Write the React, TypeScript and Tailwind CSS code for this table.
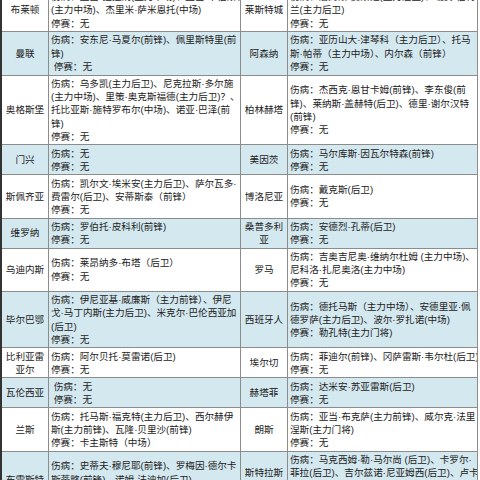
type Row = {
  l: string;
  lt: string[];
  r: string;
  rt: string[];
  blue?: boolean;
};

const rows: Row[] = [
  {
    l: '布莱顿',
    lt: ['伤病：亚当·拉拉纳(主力中场)、亚当·韦伯斯特', '(主力中场)、杰里米·萨米恩托(中场)', '停赛：无'],
    r: '莱斯特城',
    rt: ['伤病：詹姆斯·贾斯廷(主力后卫)、瑞安·伯特', '兰(主力后卫)', '停赛：无'],
  },
  {
    l: '曼联',
    lt: ['伤病：安东尼·马夏尔(前锋)、佩里斯特里(前', '锋)', ' 停赛：无'],
    r: '阿森纳',
    rt: ['伤病：亚历山大·津琴科（主力后卫）、托马', '斯·帕蒂（主力中场）、内尔森（前锋）', '停赛：无'],
    blue: true,
  },
  {
    l: '奥格斯堡',
    lt: [
      '伤病：乌多凯(主力后卫)、尼克拉斯·多尔施',
      '(主力中场)、里策·奥克斯福德(主力后卫)？、',
      '托比亚斯·施特罗布尔(中场)、诺亚·巴泽(前',
      '锋)',
      '停赛：无',
    ],
    r: '柏林赫塔',
    rt: ['伤病：杰西克·恩甘卡姆(前锋)、李东俊(前', '锋)、莱纳斯·盖赫特(后卫)、德里·谢尔汉特', '(前锋)', '停赛：无'],
  },
  {
    l: '门兴',
    lt: ['伤病：无', '停赛：无'],
    r: '美因茨',
    rt: ['伤病：马尔库斯·因瓦尔特森(前锋)', '停赛：无'],
    blue: true,
  },
  {
    l: '斯佩齐亚',
    lt: ['伤病：凯尔文·埃米安(主力后卫)、萨尔瓦多·', '费雷尔(后卫)、安蒂斯泰（前锋）', '停赛：无'],
    r: '博洛尼亚',
    rt: ['伤病：戴克斯(后卫)', '停赛：无'],
  },
  {
    l: '维罗纳',
    lt: ['伤病：罗伯托·皮科利(前锋)', '停赛：无'],
    r: '桑普多利\n亚',
    rt: ['伤病：安德烈·孔蒂(后卫)', '停赛：无'],
    blue: true,
  },
  {
    l: '乌迪内斯',
    lt: ['伤病：莱昂纳多·布塔（后卫）', '停赛：无'],
    r: '罗马',
    rt: ['伤病：吉奥吉尼奥·维纳尔杜姆 (主力中场)、', '尼科洛·扎尼奥洛(主力中场)', '停赛：无'],
  },
  {
    l: '毕尔巴鄂',
    lt: ['伤病：伊尼亚基·威廉斯（主力前锋）、伊尼', '戈·马丁内斯(主力后卫)、米克尔·巴伦西亚加', '(后卫)', '停赛：无'],
    r: '西班牙人',
    rt: ['伤病：德托马斯（主力中场）、安德里亚·佩', '德罗萨(主力后卫)、波尔·罗扎诺(中场)', '停赛：勒孔特(主力门将)'],
    blue: true,
  },
  {
    l: '比利亚雷\n亚尔',
    lt: ['伤病：阿尔贝托·莫雷诺(后卫)', '停赛：无'],
    r: '埃尔切',
    rt: ['伤病：菲迪尔(前锋)、冈萨雷斯·韦尔杜(后卫)', '停赛：无'],
  },
  {
    l: '瓦伦西亚',
    lt: [' 伤病：无', ' 停赛：无'],
    r: '赫塔菲',
    rt: ['伤病：达米安·苏亚雷斯(后卫)', '停赛：无'],
    blue: true,
  },
  {
    l: '兰斯',
    lt: ['伤病：托马斯·福克特(主力后卫)、西尔赫伊', '斯(主力前锋)、瓦隆·贝里沙(前锋)', '停赛：卡主斯特（中场）'],
    r: '朗斯',
    rt: ['伤病：亚当·布克萨(主力前锋)、威尔克·法里', '涅斯(主力门将)', '停赛：无'],
  },
  {
    l: '布雷斯特',
    lt: ['伤病：史蒂夫·穆尼耶(前锋)、罗梅因·德尔卡', '斯蒂略(前锋)、诺姆·法迪加(后卫)', '停赛：无'],
    r: '斯特拉斯\n堡',
    rt: ['伤病：马克西姆·勒·马尔尚 (后卫)、卡罗尔·', '菲拉(后卫)、吉尔兹诺·尼亚姆西(后卫)、卢卡', '斯·佩林(后卫)', '停赛：无'],
    blue: true,
  },
];

function NameCell({ text, blue }: { text: string; blue?: boolean }) {
  return (
    <div
      className={`flex items-center justify-center border-r border-b border-[#8c8c8c] py-[1.2px] text-center whitespace-pre-line ${
        blue ? 'bg-[#d4e8f0]' : 'bg-white'
      }`}
    >
      {text}
    </div>
  );
}

function InfoCell({ lines, blue }: { lines: string[]; blue?: boolean }) {
  return (
    <div
      className={`flex min-w-0 flex-col justify-center overflow-hidden border-r border-b border-[#8c8c8c] py-[1.2px] pl-[2px] ${
        blue ? 'bg-[#d4e8f0]' : 'bg-white'
      }`}
    >
      {lines.map((line, i) => (
        <div key={i} className="whitespace-pre">
          {line}
        </div>
      ))}
    </div>
  );
}

export default function App() {
  return (
    <div className="h-[480px] w-[480px] overflow-hidden bg-white">
      <div className="-mt-[11px] grid w-[478px] grid-cols-[47px_192px_47px_190px] border-l-2 border-[#333] font-['Liberation_Sans','Noto_Sans_CJK_SC',sans-serif] text-[9.6px] leading-[13.3px] text-[#222]">
        {rows.map((row, i) => (
          <div key={i} className="contents">
            <NameCell text={row.l} blue={row.blue} />
            <InfoCell lines={row.lt} blue={row.blue} />
            <NameCell text={row.r} blue={row.blue} />
            <InfoCell lines={row.rt} blue={row.blue} />
          </div>
        ))}
      </div>
    </div>
  );
}
